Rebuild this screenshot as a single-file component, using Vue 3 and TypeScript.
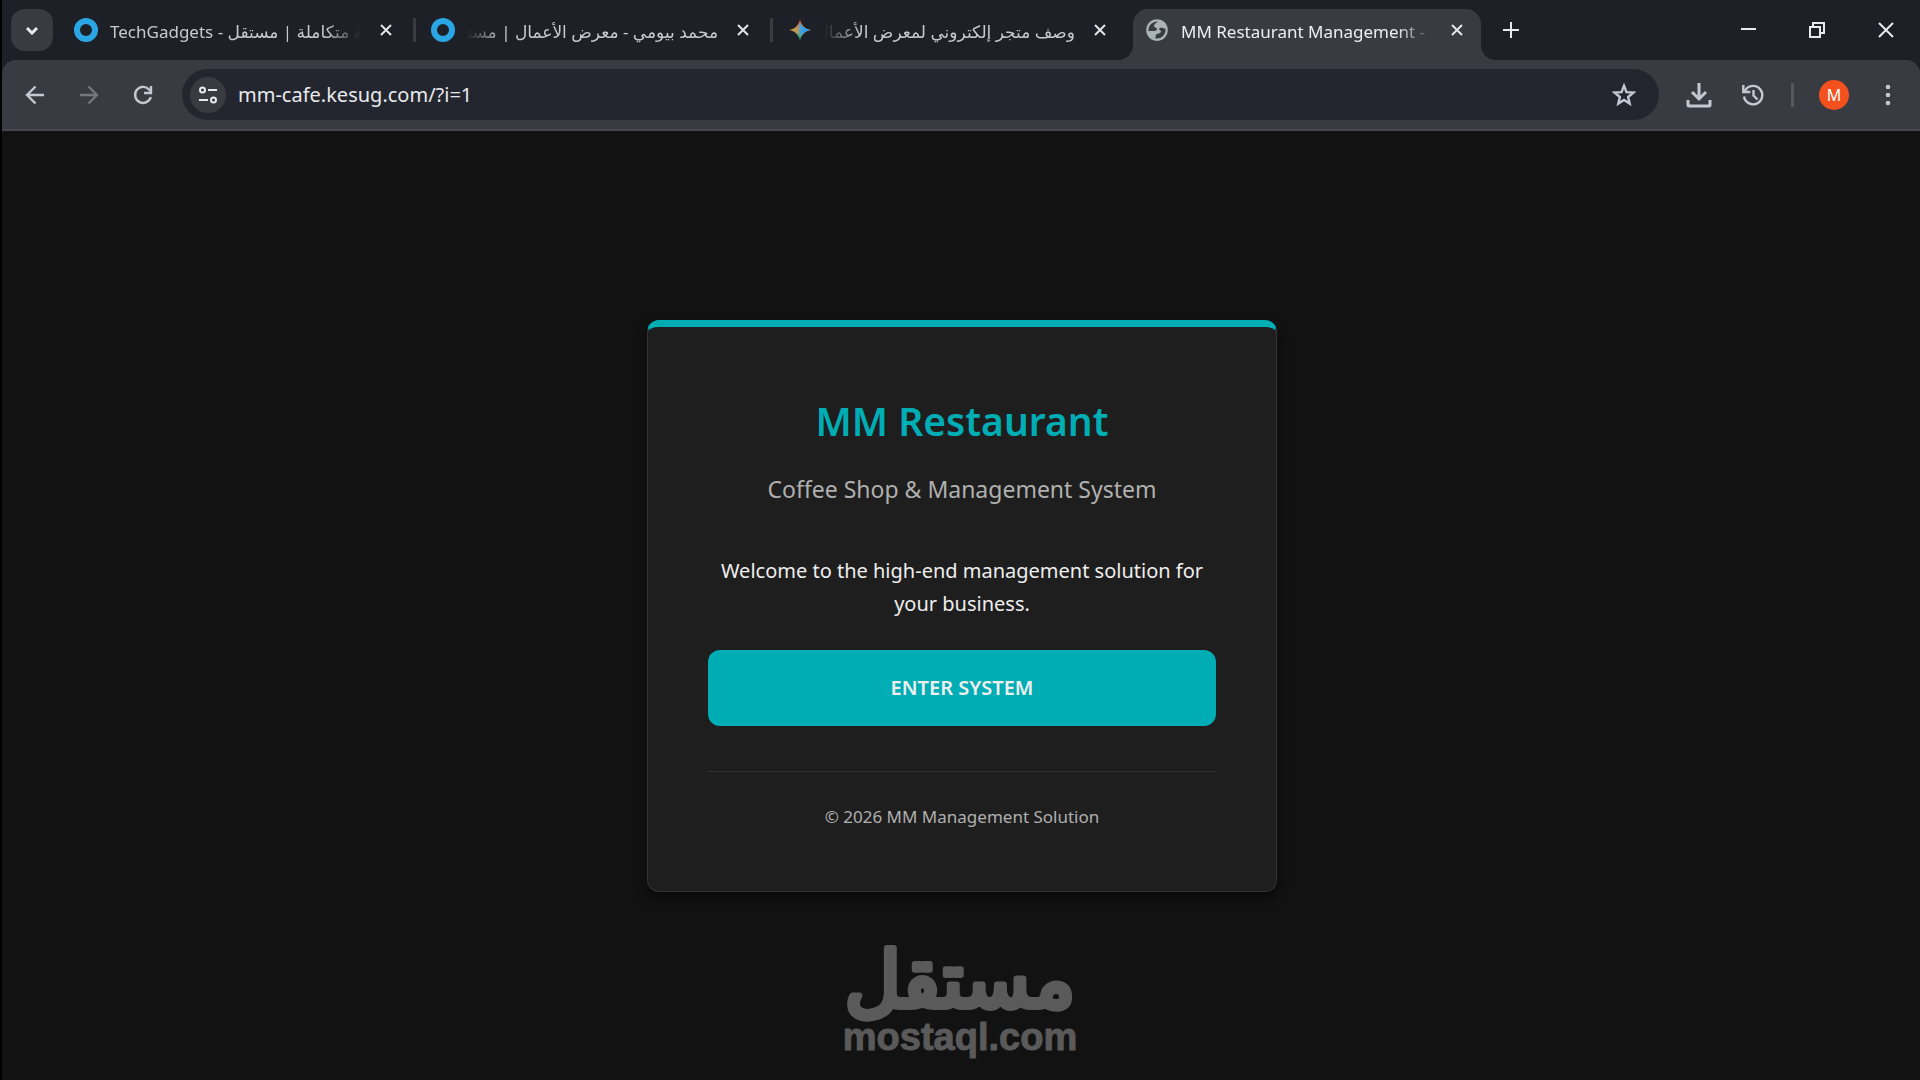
<script setup lang="ts">
import { ref } from 'vue'

interface Tab {
  title: string
  icon: 'ring' | 'spark' | 'globe'
  dir: 'ltr' | 'rtl'
  active?: boolean
}

const tabs: Tab[] = [
  { title: 'TechGadgets - منصة متكاملة | مستقل', icon: 'ring', dir: 'ltr' },
  { title: 'محمد بيومي - معرض الأعمال | مستقل', icon: 'ring', dir: 'rtl' },
  { title: 'وصف متجر إلكتروني لمعرض الأعمال', icon: 'spark', dir: 'rtl' },
  { title: 'MM Restaurant Management - Login', icon: 'globe', dir: 'ltr', active: true },
]

const address = ref('mm-cafe.kesug.com/?i=1')
</script>

<template>
  <div class="window">
    <header>
      <div class="strip">
        <button class="tab-search" aria-label="Search tabs">
          <svg width="14" height="9" viewBox="0 0 14 9"><path d="M2 2l5 5 5-5" /></svg>
        </button>
        <nav class="tabs" aria-label="Tabs">
          <div v-for="tab in tabs" :key="tab.title" class="tab" :class="{ active: tab.active }">
            <svg v-if="tab.icon === 'ring'" class="favicon" viewBox="0 0 24 24">
              <circle cx="12" cy="12" r="9" fill="none" stroke="#2ba6e4" stroke-width="6" />
            </svg>
            <svg v-else-if="tab.icon === 'spark'" class="favicon" viewBox="0 0 24 24">
              <defs>
                <linearGradient id="spark-v" x1="0" y1="0" x2="0" y2="1">
                  <stop offset="0.1" stop-color="#f4452c" />
                  <stop offset="0.35" stop-color="#c78f52" />
                  <stop offset="0.62" stop-color="#b79b55" />
                  <stop offset="0.9" stop-color="#08a558" />
                </linearGradient>
                <linearGradient id="spark-h" x1="0" y1="0" x2="1" y2="0">
                  <stop offset="0.38" stop-color="#35a4e8" stop-opacity="0" />
                  <stop offset="0.56" stop-color="#35a4e8" />
                  <stop offset="1" stop-color="#2f8df0" />
                </linearGradient>
              </defs>
              <path d="M12 1C13 7 17 11 23 12 17 13 13 17 12 23 11 17 7 13 1 12 7 11 11 7 12 1Z" fill="url(#spark-v)" />
              <path d="M12 4C13 8 17 11 23 12 17 13 13 16 12 20 11 17 7 13 1 12 7 11 11 7 12 4Z" fill="url(#spark-h)" />
            </svg>
            <svg v-else class="favicon" viewBox="0 0 24 24">
              <circle cx="12" cy="12" r="9.7" fill="none" stroke="#a9b3b9" stroke-width="2.2" />
              <path
                d="M14 3C11 5 9 6 9 8c0 2 3 1 3 3 0 1-1 2-3 2H3c0 4 3 8 7 8 1-1 0-3 1-4 1-2 4-1 5-3 0-2-2-2-2-3 1-2 4-1 6 0 2-3-1-7-6-8Z"
                fill="#a9b3b9"
              />
            </svg>
            <span class="title" :class="tab.dir" :dir="tab.dir">{{ tab.title }}</span>
            <button class="close" aria-label="Close tab">
              <svg width="14" height="14" viewBox="0 0 14 14"><path d="M2 2l10 10M12 2L2 12" /></svg>
            </button>
          </div>
        </nav>
        <button class="new-tab" aria-label="New tab">
          <svg width="18" height="18" viewBox="0 0 18 18"><path d="M9 1v16M1 9h16" /></svg>
        </button>
        <div class="controls">
          <button aria-label="Minimize">
            <svg width="16" height="16" viewBox="0 0 16 16"><path d="M1 7h15" /></svg>
          </button>
          <button aria-label="Restore">
            <svg width="16" height="16" viewBox="0 0 16 16"><path d="M1 5h10v10H1zM4 5V1h11v10h-4" /></svg>
          </button>
          <button aria-label="Close">
            <svg width="16" height="16" viewBox="0 0 16 16"><path d="M1 1l14 14M15 1L1 15" /></svg>
          </button>
        </div>
      </div>

      <div class="toolbar">
        <button class="tool" aria-label="Back">
          <svg width="24" height="24" viewBox="0 0 24 24"><path d="M21 12H4.500M12.500 3.500L4 12l8.500 8.500" /></svg>
        </button>
        <button class="tool dim" aria-label="Forward">
          <svg width="24" height="24" viewBox="0 0 24 24"><path d="M3 12h16.500M11.500 3.500L20 12l-8.500 8.500" /></svg>
        </button>
        <button class="tool" aria-label="Reload">
          <svg width="24" height="24" viewBox="0 0 24 24">
            <path d="M19.800 14a8 8 0 1 1-1.800-7.500l2 2" />
            <path d="M20 3v7h-7" />
          </svg>
        </button>
        <div class="omnibox">
          <button class="site-info" aria-label="View site information">
            <svg width="20" height="20" viewBox="0 0 20 20">
              <circle cx="4.500" cy="5" r="2.500" />
              <path d="M10 5h9M1 15h9" />
              <circle cx="15.500" cy="15" r="2.500" />
            </svg>
          </button>
          <input v-model="address" class="address" type="text" aria-label="Address" spellcheck="false" />
          <button class="tool star" aria-label="Bookmark this tab">
            <svg width="24" height="24" viewBox="0 0 24 24">
              <path d="M12 2.800l2.500 6.300 6.800.5-5.200 4.400 1.600 6.600-5.700-3.600-5.700 3.600 1.600-6.600-5.200-4.400 6.800-.5z" />
            </svg>
          </button>
        </div>
        <div class="actions">
          <button class="tool" aria-label="Downloads">
            <svg width="26" height="26" viewBox="0 0 26 26">
              <path d="M13 1v15M6 10l7 7 7-7" stroke-width="3" />
              <path d="M2 18v5q0 1 1 1h20q1 0 1-1v-5" stroke-width="3" />
            </svg>
          </button>
          <button class="tool" aria-label="History">
            <svg width="24" height="24" viewBox="0 0 24 24">
              <path d="M3 13.500A9.200 9.200 0 1 0 4.800 6.500L2.500 9" />
              <path d="M2.300 2v7h7M12.500 7v5.500l4 4" />
            </svg>
          </button>
          <span class="rule"></span>
          <button class="avatar" aria-label="Profile">M</button>
          <button class="tool" aria-label="Menu">
            <svg class="dots" width="24" height="24" viewBox="0 0 24 24">
              <circle cx="12" cy="4" r="2.300" />
              <circle cx="12" cy="12" r="2.300" />
              <circle cx="12" cy="20" r="2.300" />
            </svg>
          </button>
        </div>
      </div>
    </header>

    <main>
      <section class="card">
        <h1>MM Restaurant</h1>
        <p class="tagline">Coffee Shop &amp; Management System</p>
        <p class="welcome">Welcome to the high-end management solution for your business.</p>
        <button class="enter">ENTER SYSTEM</button>
        <footer>© 2026 MM Management Solution</footer>
      </section>
      <svg class="watermark" width="260" height="130" viewBox="0 0 260 130" role="img" aria-label="mostaql.com">
        <text class="mark-ar" x="129" y="66" text-anchor="middle" direction="rtl" lang="ar">مستقل</text>
        <text class="mark-en" x="129" y="109" text-anchor="middle">mostaql.com</text>
      </svg>
    </main>
  </div>
</template>

<style>
body {
  margin: 0;
  background: #121212;
}
</style>

<style scoped>
* {
  box-sizing: border-box;
}

.window {
  display: flex;
  flex-direction: column;
  min-height: 100vh;
  border-left: 2px solid #000;
  background: #121212;
  font-family: 'Noto Sans', 'DejaVu Sans', sans-serif;
}

button {
  display: flex;
  align-items: center;
  justify-content: center;
  margin: 0;
  padding: 0;
  border: 0;
  background: none;
  color: inherit;
  font-family: inherit;
  cursor: pointer;
}

svg {
  flex: none;
  fill: none;
  stroke: currentColor;
  stroke-width: 2;
}

header {
  background: #1d2027;
}

.strip {
  display: flex;
  height: 60px;
  padding: 9px 0 0 9px;
  color: #e8eaed;
}

.tab-search {
  width: 42px;
  height: 42px;
  border-radius: 14px;
  background: #393b43;
}

.tab-search svg {
  stroke-width: 3;
}

.tabs {
  display: flex;
  margin-left: 6px;
}

.tab {
  position: relative;
  display: flex;
  align-items: center;
  width: 357px;
  height: 42px;
  padding: 0 21px 0 15px;
  color: #c6cad0;
}

.tab:not(.active):not(:nth-last-child(2))::after {
  content: '';
  position: absolute;
  top: 9px;
  right: 0;
  width: 3px;
  height: 24px;
  background: #393b43;
}

.tab.active {
  width: 348px;
  height: 51px;
  margin-left: 3px;
  padding: 0 15px 9px 12px;
  border-radius: 15px 15px 0 0;
  background: #393b43;
  color: #eceef0;
}

.tab.active::before,
.tab.active::after {
  content: '';
  position: absolute;
  bottom: 0;
  width: 15px;
  height: 15px;
}

.tab.active::before {
  right: 100%;
  background: radial-gradient(circle at 0 0, transparent 15px, #393b43 15px);
}

.tab.active::after {
  left: 100%;
  background: radial-gradient(circle at 100% 0, transparent 15px, #393b43 15px);
}

.favicon {
  width: 24px;
  height: 24px;
  stroke: none;
}

.title {
  flex: 1;
  min-width: 0;
  margin: 4px 16px 0 12px;
  overflow: hidden;
  font-size: 17px;
  line-height: 24px;
  white-space: nowrap;
}

.title.ltr {
  mask-image: linear-gradient(to left, transparent, #000 36px);
}

.title.rtl {
  mask-image: linear-gradient(to right, transparent, #000 36px);
}

.close {
  width: 18px;
  height: 18px;
}

.close svg {
  stroke: #e3e5e8;
}

.new-tab {
  width: 42px;
  height: 42px;
  margin-left: 9px;
}

.controls {
  display: flex;
  height: 42px;
  margin-left: auto;
}

.controls button {
  width: 69px;
}

.toolbar {
  display: flex;
  align-items: center;
  height: 71px;
  padding: 0 11px 0 12px;
  border-bottom: 2px solid #44464d;
  border-radius: 14px 14px 0 0;
  background: #393b43;
  color: #c3c9d2;
}

.tool {
  width: 42px;
  height: 42px;
  margin-right: 12px;
}

.tool svg:not(.dots) {
  stroke-width: 2.4;
}

.dim {
  color: #75777c;
}

.omnibox {
  display: flex;
  flex: 1;
  align-items: center;
  height: 51px;
  margin-left: 6px;
  padding: 0 2px 0 8px;
  border-radius: 26px;
  background: #23262e;
}

.site-info {
  width: 36px;
  height: 36px;
  border-radius: 50%;
  background: #393b43;
  color: #e8eaed;
}

.address {
  flex: 1;
  min-width: 0;
  height: 36px;
  margin-left: 12px;
  padding: 0;
  border: 0;
  outline: 0;
  background: none;
  color: #e8eaed;
  font-family: inherit;
  font-size: 20px;
}

.actions {
  display: flex;
  align-items: center;
  margin-left: 19px;
}

.actions .tool:last-child {
  margin-right: 0;
}

.rule {
  width: 3px;
  height: 24px;
  margin: 0 25px 0 5px;
  background: #55575d;
}

.avatar {
  width: 30px;
  height: 30px;
  margin-right: 18px;
  border-radius: 50%;
  background: #f4511e;
  color: #fff;
  font-size: 16px;
}

.dots {
  fill: currentColor;
  stroke: none;
}

main {
  position: relative;
  display: flex;
  flex: 1;
  align-items: center;
  justify-content: center;
  padding-left: 2px;
}

.card {
  width: 630px;
  padding: 60px 60px 59px;
  border: 1px solid #333;
  border-top: 7px solid #00adb5;
  border-radius: 12px;
  background: #1e1e1e;
  box-shadow: 0 6px 12px rgba(0, 0, 0, 0.5);
  color: #eee;
  text-align: center;
}

h1 {
  margin: 0;
  color: #00adb5;
  font-size: 39px;
  font-weight: 600;
  line-height: 68px;
}

.tagline {
  margin: 16px 0 0;
  color: #b0b0b0;
  font-size: 23px;
  line-height: 36px;
}

.welcome {
  margin: 47px 0 0;
  font-size: 20px;
  line-height: 33px;
}

.enter {
  width: 100%;
  height: 76px;
  margin-top: 30px;
  border-radius: 12px;
  background: #00adb5;
  color: #eee;
  font-size: 20px;
  font-weight: 600;
}

footer {
  margin-top: 45px;
  padding-top: 30px;
  border-top: 1px solid #333;
  color: #b0b0b0;
  font-size: 17px;
  line-height: 30px;
}

.watermark {
  position: absolute;
  bottom: 9px;
  left: 50%;
  fill: #5a5a5a;
  stroke: #5a5a5a;
  stroke-linejoin: round;
  transform: translateX(-50%);
  pointer-events: none;
}

.mark-ar {
  font-family: 'DejaVu Sans', sans-serif;
  font-size: 77px;
  stroke-width: 6;
}

.mark-en {
  font-family: 'Liberation Sans', Arial, sans-serif;
  font-size: 38px;
  font-weight: 700;
  stroke-width: 1;
}
</style>
